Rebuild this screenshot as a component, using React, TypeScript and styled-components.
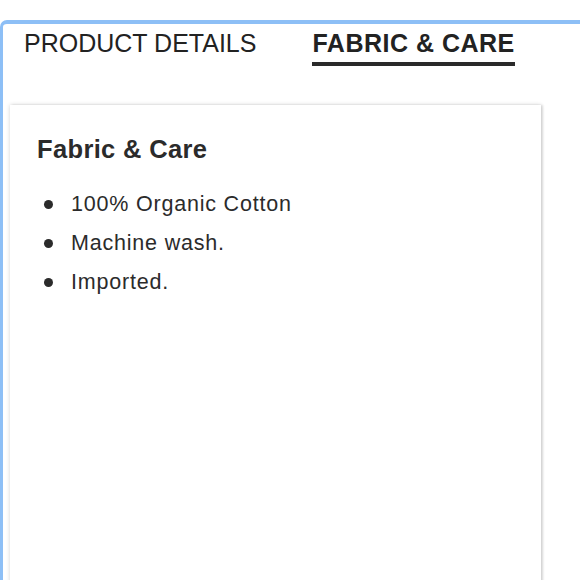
import styled, { createGlobalStyle } from "styled-components";

const GlobalStyle = createGlobalStyle`
  html, body {
    margin: 0;
    padding: 0;
    background: #fff;
    overflow: hidden;
  }
  body {
    font-family: "Liberation Sans", Arial, sans-serif;
    color: #2b2b2b;
  }
`;

const items = ["100% Organic Cotton", "Machine wash.", "Imported."];

export default function App() {
  return (
    <>
      <GlobalStyle />
      <Frame>
        <Tabs>
          <Tab>PRODUCT DETAILS</Tab>
          <Tab $active>FABRIC &amp; CARE</Tab>
        </Tabs>
        <Card>
          <Heading>Fabric &amp; Care</Heading>
          <List>
            {items.map((item) => (
              <Item key={item}>{item}</Item>
            ))}
          </List>
        </Card>
      </Frame>
    </>
  );
}

const Frame = styled.div`
  margin-top: 20px;
  width: 100%;
  height: 560px;
  border-top: 4px solid #8dbff6;
  border-left: 3px solid #8dbff6;
  border-top-left-radius: 7px;
  box-sizing: border-box;
  padding: 0 0 0 7px;
  display: flex;
  flex-direction: column;
  overflow: hidden;
`;

const Tabs = styled.div`
  display: flex;
  gap: 56px;
  padding-left: 14px;
  height: 81px;
  flex-shrink: 0;
`;

const Tab = styled.div<{ $active?: boolean }>`
  font-size: 25px;
  line-height: 28px;
  padding-top: 5px;
  height: 33px;
  font-weight: ${(p) => (p.$active ? 700 : 400)};
  letter-spacing: ${(p) => (p.$active ? "0.5px" : "0")};
  color: #222;
  border-bottom: 4px solid ${(p) => (p.$active ? "#2a2a2a" : "transparent")};
`;

const Card = styled.div`
  width: 531px;
  flex: 1;
  margin-bottom: -10px;
  box-sizing: border-box;
  background: #fff;
  padding: 29px 0 0 27px;
  box-shadow: 0 0 4px rgba(0, 0, 0, 0.18), 2px 0 2px rgba(0, 0, 0, 0.1);
`;

const Heading = styled.h3`
  margin: 0;
  font-size: 25.5px;
  line-height: 30px;
  font-weight: 700;
  letter-spacing: 0.35px;
  color: #2b2b2b;
`;

const List = styled.ul`
  list-style: none;
  margin: 21px 0 0;
  padding: 0;
`;

const Item = styled.li`
  display: flex;
  align-items: center;
  height: 39px;
  font-size: 21.5px;
  letter-spacing: 0.8px;
  color: #2b2b2b;
  &::before {
    content: "";
    width: 9px;
    height: 9px;
    border-radius: 50%;
    background: #2b2b2b;
    margin: 0 18px 0 7px;
    flex-shrink: 0;
  }
`;
